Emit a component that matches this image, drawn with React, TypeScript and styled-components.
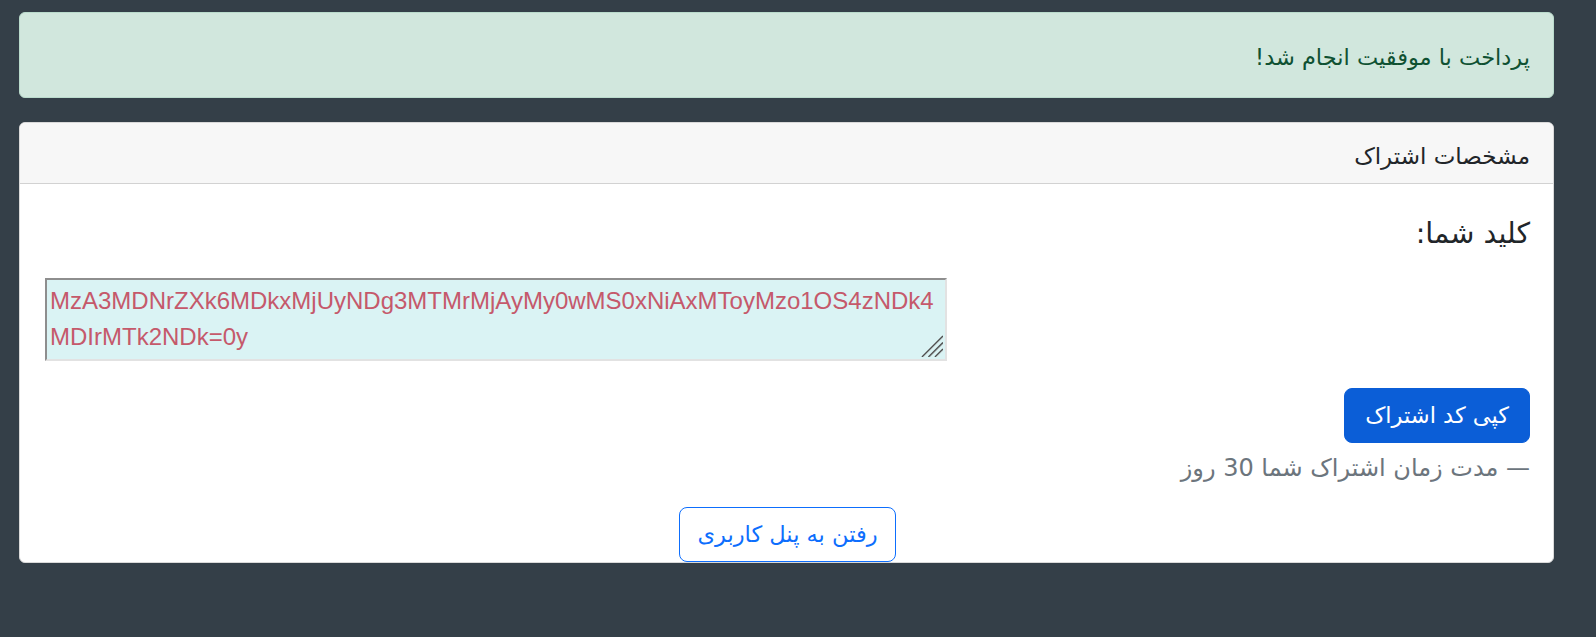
import React from "react";
import styled, { createGlobalStyle } from "styled-components";

const GlobalStyle = createGlobalStyle`
  html, body {
    margin: 0;
    padding: 0;
    background: #343f48;
  }
  body {
    font-family: "DejaVu Sans", "Noto Sans", sans-serif;
    font-size: 16px;
  }
  * { box-sizing: border-box; }
`;

const Page = styled.div`
  direction: rtl;
  padding: 12px 42px 40px 19px;
  display: flex;
  flex-direction: column;
  gap: 24px;
`;

const Alert = styled.div`
  background: #d1e7dd;
  border: 1px solid #badbcc;
  border-radius: 6px;
  color: #0f5132;
  padding: 29px 23px 25px;
  font-size: 22.5px;
  line-height: 30px;
`;

const Card = styled.section`
  background: #ffffff;
  border: 1px solid #d9d9d9;
  border-radius: 6px;
  overflow: hidden;
`;

const CardHeader = styled.header`
  background: #f7f7f7;
  border-bottom: 1px solid #d2d2d2;
  padding: 18px 23px 12px;
  font-size: 23px;
  line-height: 30px;
  color: #212529;
`;

const CardBody = styled.div`
  padding: 30px 23px 0 25px;
  display: flex;
  flex-direction: column;
  align-items: flex-start;
`;

const KeyTitle = styled.h4`
  margin: 0 0 24px;
  font-size: 28.5px;
  font-weight: 400;
  line-height: 40px;
  color: #212529;
`;

const KeyField = styled.div`
  position: relative;
  align-self: flex-end;
  margin: 0 0 27px;
`;

const KeyBox = styled.textarea`
  display: block;
  direction: ltr;
  width: 902px;
  height: 83px;
  margin: 0;
  padding: 3px;
  font-family: "Liberation Sans", Arial, sans-serif;
  font-size: 24px;
  line-height: 36px;
  color: #c5596b;
  background: #daf3f4;
  border-style: solid;
  border-width: 2px;
  border-color: #8e8e8e #e2e2e2 #e2e2e2 #8e8e8e;
  resize: none;
  outline: none;
  overflow: hidden;
`;

const Grip = styled.svg`
  position: absolute;
  right: 4px;
  bottom: 4px;
  width: 22px;
  height: 22px;
  pointer-events: none;
`;

const ActionButton = styled.button<{ $outline?: boolean }>`
  font-family: "DejaVu Sans", "Noto Sans", sans-serif;
  font-size: 22.5px;
  line-height: 31px;
  padding: ${(p) => (p.$outline ? "11px 17px" : "11px 20px")};
  border-radius: 8px;
  cursor: pointer;
  border: 1px solid ${(p) => (p.$outline ? "#0d6efd" : "#0b5ed7")};
  background: ${(p) => (p.$outline ? "#ffffff" : "#0b5ed7")};
  color: ${(p) => (p.$outline ? "#0d6efd" : "#ffffff")};
`;

const Duration = styled.p`
  margin: 8px 0 22px;
  font-size: 24px;
  line-height: 34px;
  color: #6c757d;
`;

const Footer = styled.div`
  align-self: stretch;
  display: flex;
  justify-content: center;
`;

export default function App() {
  return (
    <>
      <GlobalStyle />
      <Page>
        <Alert>پرداخت با موفقیت انجام شد!</Alert>
        <Card>
          <CardHeader>مشخصات اشتراک</CardHeader>
          <CardBody>
            <KeyTitle>کلید شما:</KeyTitle>
            <KeyField>
              <KeyBox
                readOnly
                rows={2}
                defaultValue="MzA3MDNrZXk6MDkxMjUyNDg3MTMrMjAyMy0wMS0xNiAxMToyMzo1OS4zNDk4MDIrMTk2NDk=0y"
              />
              <Grip viewBox="0 0 22 22" aria-hidden="true">
                <g strokeWidth="1.6" strokeLinecap="butt">
                  <line x1="1" y1="22" x2="22" y2="1" stroke="#4f4f4f" />
                  <line x1="2.2" y1="22" x2="22" y2="2.2" stroke="#b9c4c4" strokeWidth="0.8" />
                  <line x1="7.5" y1="22" x2="22" y2="7.5" stroke="#4f4f4f" />
                  <line x1="8.7" y1="22" x2="22" y2="8.7" stroke="#b9c4c4" strokeWidth="0.8" />
                  <line x1="14" y1="22" x2="22" y2="14" stroke="#4f4f4f" />
                  <line x1="15.2" y1="22" x2="22" y2="15.2" stroke="#b9c4c4" strokeWidth="0.8" />
                </g>
              </Grip>
            </KeyField>
            <ActionButton type="button">کپی کد اشتراک</ActionButton>
            <Duration>— مدت زمان اشتراک شما 30 روز</Duration>
            <Footer>
              <ActionButton type="button" $outline>
                رفتن به پنل کاربری
              </ActionButton>
            </Footer>
          </CardBody>
        </Card>
      </Page>
    </>
  );
}
